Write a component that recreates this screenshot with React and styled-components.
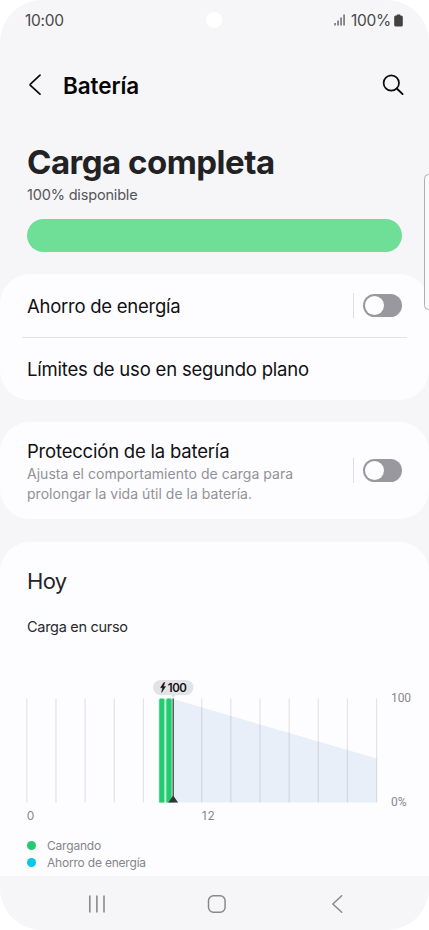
import React from "react";
import styled, { createGlobalStyle } from "styled-components";

const GlobalStyle = createGlobalStyle`
  * {
    box-sizing: border-box;
  }
  body {
    margin: 0;
    background: #ffffff;
    font-family: Inter, Roboto, "Liberation Sans", sans-serif;
  }
`;

const Screen = styled.div`
  position: relative;
  display: flex;
  flex-direction: column;
  width: 429px;
  height: 930px;
  overflow: hidden;
  border-radius: 42px;
  background: #f6f6f8;
`;

const StatusBar = styled.div`
  display: grid;
  grid-template-columns: 1fr 16px 1fr;
  align-items: center;
  height: 40px;
  padding: 0 26px 0 25px;
  color: #48484b;
  font-size: 15.5px;
  letter-spacing: -0.3px;
`;

const Camera = styled.div`
  width: 16px;
  height: 16px;
  border-radius: 50%;
  background: #ffffff;
`;

const StatusIcons = styled.div`
  display: flex;
  align-items: center;
  justify-content: flex-end;
  svg:first-child {
    margin-right: 5px;
  }
  svg:last-child {
    margin-left: 3px;
  }
`;

const Header = styled.header`
  display: flex;
  align-items: center;
  height: 90px;
  padding: 0 25px 0 28px;
`;

const HeaderTitle = styled.h1`
  flex: 1;
  margin: 0 0 0 21px;
  color: #050505;
  font-size: 22.5px;
  font-weight: 600;
  letter-spacing: -0.1px;
`;

const Summary = styled.section`
  height: 144px;
  padding: 12px 27px 0;
`;

const SummaryTitle = styled.h2`
  margin: 0;
  color: #222225;
  font-size: 33px;
  font-weight: 700;
  line-height: 40px;
  letter-spacing: -0.5px;
`;

const SummaryText = styled.p`
  margin: 3px 0 14px;
  color: #55555a;
  font-size: 14.5px;
  line-height: 20px;
  letter-spacing: -0.17px;
`;

const Level = styled.div`
  height: 33px;
  border-radius: 17px;
  background: #6fde97;
`;

const Card = styled.section`
  flex: none;
  height: ${(props) => props.$height}px;
  margin-bottom: ${(props) => props.$gap || 0}px;
  padding: 0 27px;
  border-radius: ${(props) => (props.$open ? "30px 30px 0 0" : "30px")};
  background: #fdfdff;
`;

const Row = styled.div`
  display: flex;
  align-items: center;
  height: ${(props) => props.$height}px;
`;

const RowDivider = styled.div`
  height: 1px;
  margin: 0 -5px;
  background: #e3e3e6;
`;

const RowText = styled.div`
  flex: 1;
`;

const Label = styled.div`
  color: #101012;
  font-size: 18.5px;
  line-height: 24px;
  letter-spacing: ${(props) => props.$tracking || "-0.2px"};
`;

const Description = styled.div`
  padding-top: 1px;
  margin-bottom: -2px;
  color: #919196;
  font-size: 14px;
  line-height: 20px;
  letter-spacing: 0.03px;
`;

const SwitchArea = styled.div`
  display: flex;
  align-items: center;
  height: 25px;
  padding-left: 9px;
  border-left: 1px solid #dfdfe3;
`;

const Switch = styled.button`
  display: block;
  width: 39px;
  height: 23px;
  padding: 2px;
  border: 0;
  border-radius: 12px;
  background: #99989f;
`;

const Thumb = styled.span`
  display: block;
  width: 19px;
  height: 19px;
  border-radius: 50%;
  background: #fdfdff;
`;

const Today = styled.h3`
  margin: 0;
  padding-top: 25px;
  color: #252528;
  font-size: 22px;
  font-weight: 400;
  line-height: 28px;
  letter-spacing: -0.7px;
`;

const ChargeState = styled.p`
  margin: 22px 0 42px;
  color: #29292c;
  font-size: 14.5px;
  line-height: 20px;
  letter-spacing: -0.3px;
`;

const Chart = styled.svg`
  display: block;
  width: 402px;
  height: 148px;
  overflow: visible;
  font-family: Roboto, "Liberation Sans", sans-serif;
  font-size: 12px;
  fill: #88888c;
`;

const Badge = styled.text`
  fill: #111113;
  font-family: Inter, sans-serif;
  font-weight: 600;
  font-size: 11.5px;
`;

const HourLabel = styled.text`
  font-family: Inter, sans-serif;
  font-size: 12px;
`;

const Legend = styled.ul`
  margin: 10px 0 0;
  padding: 0;
  list-style: none;
`;

const LegendItem = styled.li`
  display: flex;
  align-items: center;
  height: 17px;
  color: #858589;
  font-size: 12px;
  letter-spacing: -0.2px;
  &::before {
    content: "";
    width: 9px;
    height: 9px;
    margin-right: 11px;
    border-radius: 50%;
    background: ${(props) => props.$color};
  }
`;

const NavBar = styled.nav`
  display: flex;
  align-items: center;
  justify-content: space-between;
  flex: none;
  height: 54px;
  padding: 2px 86px 0 88px;
  background: #f6f6f8;
`;

/* edge panel handle, lies over the right side of the screen */
const EdgeHandle = styled.div`
  position: absolute;
  top: 174px;
  right: -4px;
  width: 9px;
  height: 136px;
  border: 1px solid #aeaeb0;
  border-radius: 5px;
  background: #f9f9fb;
`;

const SignalIcon = () => (
  <svg width="12" height="12" viewBox="0 0 12 12" fill="#555558">
    <rect x="0.4" y="9" width="1.3" height="2.5" />
    <rect x="3.4" y="6.5" width="1.3" height="5" />
    <rect x="6.4" y="3.5" width="1.3" height="8" />
    <rect x="9.4" y="0.5" width="1.3" height="11" />
  </svg>
);

const BatteryIcon = () => (
  <svg width="9" height="13" viewBox="0 0 9 13" fill="#424244">
    <path d="M2.8 0.5h3.4v1h1.1a1.5 1.5 0 0 1 1.5 1.5v8a1.5 1.5 0 0 1-1.5 1.5H1.7A1.5 1.5 0 0 1 .2 11V3a1.5 1.5 0 0 1 1.5-1.5h1.1z" />
  </svg>
);

const BackIcon = () => (
  <svg width="14" height="22" viewBox="0 0 14 22" fill="none">
    <path
      d="M12 1.2L2.4 10.1a.8.8 0 0 0 0 1.2L12 20.2"
      stroke="#0a0a0a"
      strokeWidth="1.7"
      strokeLinecap="round"
    />
  </svg>
);

const SearchIcon = () => (
  <svg width="22" height="22" viewBox="0 0 22 22" fill="none" stroke="#0a0a0a">
    <circle cx="9.3" cy="9" r="7.7" strokeWidth="1.7" />
    <path d="M14.8 14.5l5.8 5.6" strokeWidth="1.9" strokeLinecap="round" />
  </svg>
);

const RecentsIcon = () => (
  <svg width="18" height="18" viewBox="0 0 18 18" fill="#89898c">
    <rect x="1" y="0.5" width="1.6" height="17" />
    <rect x="8.1" y="0.5" width="1.6" height="17" />
    <rect x="15.2" y="0.5" width="1.6" height="17" />
  </svg>
);

const HomeIcon = () => (
  <svg width="24" height="20" viewBox="0 0 24 20" fill="none">
    <rect x="1.5" y="1.7" width="16.6" height="16.6" rx="5" stroke="#89898c" strokeWidth="1.5" />
  </svg>
);

const NavBackIcon = () => (
  <svg width="12" height="18" viewBox="0 0 12 18" fill="none">
    <path d="M10.7 .8L1.8 9l8.9 8.2" stroke="#89898c" strokeWidth="1.5" strokeLinecap="round" strokeLinejoin="round" />
  </svg>
);

const SwitchControl = ({ label }) => (
  <SwitchArea>
    <Switch role="switch" aria-checked="false" aria-label={label}>
      <Thumb />
    </Switch>
  </SwitchArea>
);

const gridLines = Array.from({ length: 13 }, (_, i) => -0.2 + i * 29.15);

const BatteryChart = () => (
  <Chart viewBox="0 0 402 148">
    <path d="M146 20L349.8 79.5V123.5H146z" fill="#e8eff8" />
    {gridLines.map((x) => (
      <rect key={x} x={x - 0.6} y="19.5" width="1.2" height="104" fill="#7f7f8c" fillOpacity="0.2" />
    ))}
    <rect x="131.6" y="19.5" width="14" height="104" fill="#b9f3cf" />
    <path d="M132.3 123.5V21q0-1.5 1.5-1.5h2q1.5 0 1.5 1.5v102.5z" fill="#22cb70" />
    <path d="M139.4 123.5V21q0-1.5 1.5-1.5h2.2q1.5 0 1.5 1.5v102.5z" fill="#22cb70" />
    <rect x="145.6" y="19.5" width="1.2" height="104" fill="#3d4040" />
    <path d="M146.2 116.6l4.9 6.9h-9.8z" fill="#333436" />
    <rect x="126" y="1" width="40.5" height="15" rx="7.5" fill="#e3e3e5" />
    <path d="M143.7 16h5l-2.5 2.4z" fill="#e3e3e5" />
    <path d="M136.8 3.5l-3.3 5.3h2.1l-1 4.7 4-6h-2.2l1.5-4z" fill="#111113" stroke="#111113" strokeWidth="0.4" />
    <Badge x="140.8" y="12.6" textLength="19">100</Badge>
    <text x="364" y="23" textLength="20">100</text>
    <text x="364" y="127" textLength="15.5">0%</text>
    <HourLabel x="-0.3" y="141.3">0</HourLabel>
    <HourLabel x="174.8" y="141.3" textLength="13">12</HourLabel>
  </Chart>
);

const App = () => {
  return (
    <>
      <GlobalStyle />
      <Screen>
        <StatusBar>
          <span>10:00</span>
          <Camera />
          <StatusIcons>
            <SignalIcon />
            <span>100%</span>
            <BatteryIcon />
          </StatusIcons>
        </StatusBar>
        <Header>
          <BackIcon />
          <HeaderTitle>Batería</HeaderTitle>
          <SearchIcon />
        </Header>
        <Summary>
          <SummaryTitle>Carga completa</SummaryTitle>
          <SummaryText>100% disponible</SummaryText>
          <Level />
        </Summary>
        <Card $height={126} $gap={22}>
          <Row $height={63}>
            <RowText>
              <Label $tracking="-0.25px">Ahorro de energía</Label>
            </RowText>
            <SwitchControl label="Ahorro de energía" />
          </Row>
          <RowDivider />
          <Row $height={62}>
            <Label>Límites de uso en segundo plano</Label>
          </Row>
        </Card>
        <Card $height={97} $gap={23}>
          <Row $height={97}>
            <RowText>
              <Label>Protección de la batería</Label>
              <Description>
                Ajusta el comportamiento de carga para
                <br />
                prolongar la vida útil de la batería.
              </Description>
            </RowText>
            <SwitchControl label="Protección de la batería" />
          </Row>
        </Card>
        <Card $height={334} $open>
          <Today>Hoy</Today>
          <ChargeState>Carga en curso</ChargeState>
          <BatteryChart />
          <Legend>
            <LegendItem $color="#22cb70">Cargando</LegendItem>
            <LegendItem $color="#08c8e4">Ahorro de energía</LegendItem>
          </Legend>
        </Card>
        <NavBar>
          <RecentsIcon />
          <HomeIcon />
          <NavBackIcon />
        </NavBar>
        <EdgeHandle />
      </Screen>
    </>
  );
};

export default App;
